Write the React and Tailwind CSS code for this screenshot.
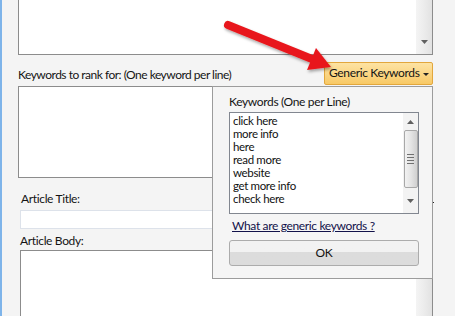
import React from 'react';

const UpArrow = () => (
  <svg width="7" height="4" viewBox="0 0 7 4" className="block">
    <path d="M0 4 L3.5 0 L7 4 Z" fill="#606060" />
  </svg>
);

const DownArrow = () => (
  <svg width="7" height="4" viewBox="0 0 7 4" className="block">
    <path d="M0 0 L7 0 L3.5 4 Z" fill="#606060" />
  </svg>
);

const RedArrow = () => (
  <svg
    className="absolute left-[-2px] top-0 pointer-events-none"
    width="455"
    height="120"
    viewBox="0 0 455 120"
  >
    <defs>
      <filter id="shadow" x="-20%" y="-50%" width="140%" height="200%">
        <feDropShadow dx="1" dy="2" stdDeviation="1.5" floodColor="#000" floodOpacity="0.35" />
      </filter>
    </defs>
    <g filter="url(#shadow)">
      <line x1="228" y1="25" x2="312" y2="59" stroke="#e8191b" strokeWidth="8" strokeLinecap="round" />
      <polygon points="316,48 331,67 307,70" fill="#e8191b" />
    </g>
  </svg>
);

const KEYWORDS = ['click here', 'more info', 'here', 'read more', 'website', 'get more info', 'check here'];

const KeywordPopup = () => (
  <div className="absolute left-[210px] top-[86px] w-[221px] h-[193px] border border-[#9c9c9c] bg-[#f5f5f5] pl-[16px] pt-[6px]">
    <div className="h-[18px] leading-[18px] text-[#141414] whitespace-nowrap">Keywords (One per Line)</div>
    <div className="mt-[1px] w-[190px] h-[102px] border border-[#828790] bg-white flex">
      <div className="flex-1 pl-[3px] pt-[1px] text-[11.5px] leading-[13px] text-[#111]">
        {KEYWORDS.map((k) => (
          <div key={k} className="h-[13px] whitespace-nowrap">{k}</div>
        ))}
      </div>
      <div className="w-[15px] flex flex-col items-center bg-[#f3f3f3]">
        <div className="h-[17px] flex items-center justify-center">
          <UpArrow />
        </div>
        <div className="w-[14px] h-[58px] border border-[#a8a8a8] rounded-[2px] bg-gradient-to-r from-[#f2f2f2] via-[#e4e4e4] to-[#d0d0d0] flex flex-col items-center justify-center gap-[2px]">
          <div className="w-[7px] h-px bg-[#707070]" />
          <div className="w-[7px] h-px bg-[#707070]" />
          <div className="w-[7px] h-px bg-[#707070]" />
          <div className="w-[7px] h-px bg-[#707070]" />
        </div>
        <div className="flex-1 flex items-center justify-center">
          <DownArrow />
        </div>
      </div>
    </div>
    <div className="mt-[3px] pl-[3px] h-[18px] leading-[18px] text-[#12124a] underline whitespace-nowrap">
      What are generic keywords ?
    </div>
    <div className="mt-[5px] w-[190px] h-[26px] border border-[#acacac] rounded-[3px] bg-gradient-to-b from-[#f2f2f2] from-45% to-[#dcdcdc] to-45% flex items-center justify-center text-[#111]">
      OK
    </div>
  </div>
);

export default function App() {
  return (
    <div className="relative w-[455px] h-[316px] overflow-hidden bg-[#f4f4f4] border-l-2 border-[#7eb4ea] text-[12px] tracking-[-0.35px] text-[#141414] font-['Lato','Noto_Sans',sans-serif]">
      <div className="pl-[16px] pr-[22px]">
        <div className="h-[55px] border border-t-0 border-[#8c8c8c] bg-white flex justify-end">
          <div className="w-[16px] flex flex-col items-center bg-gradient-to-r from-[#f4f4f4] via-[#ececec] to-[#e2e2e2]">
            <div className="flex-1" />
            <div className="h-[16px] flex items-start justify-center pt-[2px]">
              <DownArrow />
            </div>
          </div>
        </div>

        <div className="mt-[7px] h-[22px] flex items-center justify-between">
          <div className="mt-[3px] whitespace-nowrap tracking-[-0.5px]">Keywords to rank for: (One keyword per line)</div>
          <div className="w-[109px] h-[23px] border border-[#e2a73d] rounded-[2px] bg-gradient-to-b from-[#fde3a3] to-[#f8c965] flex items-center pl-[4px] pr-[3px]">
            <span className="flex-1 whitespace-nowrap">Generic Keywords</span>
            <svg width="6" height="3" viewBox="0 0 6 3" className="mt-[2px] shrink-0">
              <path d="M0 0 L6 0 L3 3 Z" fill="#222" />
            </svg>
          </div>
        </div>

        <div className="mt-[2px] h-[92px] border border-[#8c8c8c] bg-white" />

        <div className="pl-[2px]">
          <div className="mt-[13px] h-[16px] leading-[16px] pl-[1px]">Article Title:</div>
          <div className="mt-[3px] h-[19px] border border-[#dde2ea] bg-white" />
          <div className="mt-[4px] h-[16px] leading-[16px]">Article Body:</div>
          <div className="mt-px h-[80px] border border-[#8c8c8c] bg-white flex justify-end">
            <div className="w-[16px] bg-gradient-to-r from-[#f4f4f4] via-[#ececec] to-[#e2e2e2]" />
          </div>
        </div>
      </div>

      <KeywordPopup />
      <div className="absolute left-[431px] top-[202px] w-px h-px bg-[#222]" />
      <RedArrow />
    </div>
  );
}
